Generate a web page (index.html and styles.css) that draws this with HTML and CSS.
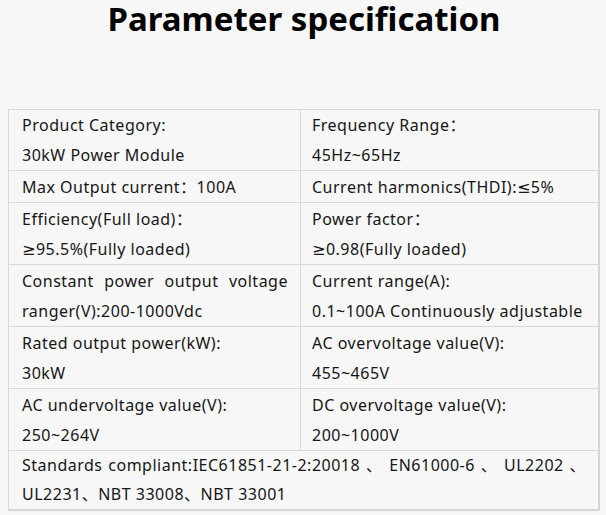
FILE: index.html
```
<!DOCTYPE html>
<html>
<head>
<meta charset="utf-8">
<link rel="stylesheet" href="styles.css">
</head>
<body>
<div class="page">
  <h1 class="title">Parameter specification</h1>
  <table class="spec">
    <tr class="first">
      <td class="c1"><div>Product Category:</div><div>30kW Power Module</div></td>
      <td class="c2"><div>Frequency Range：</div><div>45Hz~65Hz</div></td>
    </tr>
    <tr>
      <td class="c1"><div>Max Output current：100A</div></td>
      <td class="c2"><div>Current harmonics(THDI):≤5%</div></td>
    </tr>
    <tr>
      <td class="c1"><div>Efficiency(Full load)：</div><div>≥95.5%(Fully loaded)</div></td>
      <td class="c2"><div>Power factor：</div><div>≥0.98(Fully loaded)</div></td>
    </tr>
    <tr>
      <td class="c1"><div class="just">Constant power output voltage ranger(V):200-1000Vdc</div></td>
      <td class="c2"><div>Current range(A):</div><div>0.1~100A Continuously adjustable</div></td>
    </tr>
    <tr>
      <td class="c1"><div>Rated output power(kW):</div><div>30kW</div></td>
      <td class="c2"><div>AC overvoltage value(V):</div><div>455~465V</div></td>
    </tr>
    <tr>
      <td class="c1"><div>AC undervoltage value(V):</div><div>250~264V</div></td>
      <td class="c2"><div>DC overvoltage value(V):</div><div>200~1000V</div></td>
    </tr>
    <tr class="last">
      <td colspan="2"><div class="just">Standards compliant:IEC61851-21-2:20018 、 EN61000-6 、 UL2202 、 UL2231、NBT 33008、NBT 33001</div></td>
    </tr>
  </table>
</div>
</body>
</html>
```

FILE: styles.css
```
html, body {
  margin: 0;
  padding: 0;
  background: #f7f7f7;
}
.page {
  width: 606px;
  height: 515px;
  padding: 0 6px 0 8px;
  box-sizing: border-box;
  font-family: "Noto Sans", "DejaVu Sans", "Noto Sans CJK SC", sans-serif;
  color: #161616;
}
.title {
  margin: 0;
  height: 109px;
  padding-top: 0;
  box-sizing: border-box;
  text-align: center;
  font-size: 33px;
  line-height: 38px;
  font-weight: 700;
  color: #000;
}
.spec {
  width: 592px;
  border-collapse: collapse;
  border: 1px solid #d6d6d6;
  border-right: 2px solid #d6d6d6;
  border-bottom: 2px solid #d6d6d6;
  font-size: 16px;
  line-height: 30px;
  letter-spacing: 0.5px;
}
.spec td {
  border: 1px solid #d9d9d9;
  padding: 1px 12px 0 13px;
  vertical-align: top;
}
.spec tr.first td {
  padding-top: 0;
}
.spec tr.last td {
  padding-top: 0;
  line-height: 29px;
}
.spec td.c1 {
  width: 266px;
}
.spec td.c2 {
  padding-left: 11px;
}
.just {
  text-align: justify;
}
```
